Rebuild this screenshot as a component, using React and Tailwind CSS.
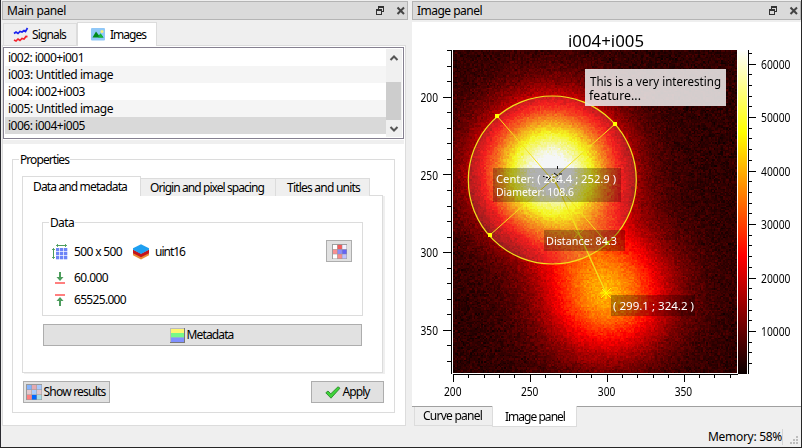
import { useEffect, useLayoutEffect, useRef } from 'react';

// Single-line label whose tracking is adjusted so that it fills a given width.
function Label({ w, className = '', children }) {
  const ref = useRef(null);
  useLayoutEffect(() => {
    const el = ref.current;
    el.style.letterSpacing = '0px';
    const natural = el.getBoundingClientRect().width;
    el.style.letterSpacing = `${(w - natural) / children.length}px`;
  }, [w, children]);
  return (
    <span ref={ref} className={`inline-block shrink-0 whitespace-pre ${className}`}>
      {children}
    </span>
  );
}

const IMAGES = [
  ['i002: i000+i001', 76],
  ['i003: Untitled image', 105],
  ['i004: i002+i003', 77],
  ['i005: Untitled image', 105],
  ['i006: i004+i005', 77],
];

function TitleBar({ title, w, className = '' }) {
  return (
    <div className={`flex h-[19px] shrink-0 items-center border border-[#b4b4b4] bg-[#dadada] pl-[4px] ${className}`}>
      <Label w={w}>{title}</Label>
      <svg className="ml-auto" width="32" height="10" viewBox="0 0 32 10" shapeRendering="crispEdges">
        <path d="M3 0h6v6h-2v-1h1v-3h-4v1h-1z" fill="#333" />
        <path d="M1 3h6v6h-6z M2 5v3h4v-3z" fill="#333" fillRule="evenodd" />
        <path d="M22.5 1.5l6.5 6.5M29 1.5l-6.5 6.5" stroke="#444" strokeWidth="2" shapeRendering="auto" />
      </svg>
    </div>
  );
}

function SignalsIcon() {
  return (
    <svg width="16" height="16" viewBox="0 0 16 16" fill="none" strokeWidth="1.700">
      <path d="M1 6.500L3 5l2 1.500L7 4.500l2 .5 2-1.500 1.500 1L14.500 1" stroke="#1a22ee" />
      <path d="M1 13l2 1 2-2 2 1.500 2-2 2 .5 2-2.500 1.500 .2" stroke="#f3222c" />
    </svg>
  );
}

function PictureIcon() {
  return (
    <svg width="14" height="13" viewBox="0 0 14 13">
      <rect width="14" height="12.500" rx="1" fill="#90c8f8" />
      <path d="M1.500 9.500L5 3.500l3 4 1.500-2 3 4z" fill="#008a1c" />
      <path d="M7 9.500l2.500-4 3 4z" fill="#14b83a" />
      <circle cx="11" cy="3.500" r="1.500" fill="#f5ef7a" />
    </svg>
  );
}

function ShapeIcon() {
  const cells = [0, 1, 2].flatMap((r) => [0, 1, 2].map((c) => [c, r]));
  return (
    <svg width="16" height="16" viewBox="0 0 16 16">
      {cells.map(([c, r]) => (
        <rect key={`${c}${r}`} x={4 + c * 4} y={4 + r * 4} width="3.300" height="3.300" fill="#6d84f7" />
      ))}
      <path d="M4.500 1.500h10M6 .2L4.500 1.500 6 2.800M13 .2l1.500 1.300L13 2.800M1.500 4.500v10M.2 6l1.300-1.500L2.800 6M.2 13l1.300 1.500L2.800 13" stroke="#4c9c5c" fill="none" />
    </svg>
  );
}

function LayersIcon() {
  return (
    <svg width="16" height="16" viewBox="0 0 16 16">
      <path d="M0 7l8 4 8-4v4.200l-8 4.300-8-4.300z" fill="#e88b35" />
      <path d="M0 5.500l8 4 8-4v3.700l-8 4-8-4z" fill="#c4141c" />
      <path d="M8 .3l8 4v1.500L8 9.900 0 5.800V4.300z" fill="#1e9ff0" />
    </svg>
  );
}

function LimitIcon({ top }) {
  return (
    <svg width="12" height="12" viewBox="0 0 12 12">
      <g transform={top ? 'translate(0 12) scale(1 -1)' : undefined}>
        <path d="M5 0h2v5h2.500L6 9 2.500 5H5z" fill="#4c9c5c" />
        <rect x="1" y="10" width="10" height="2" fill="#ff7f7f" />
      </g>
    </svg>
  );
}

function MatrixIcon({ colors, size }) {
  return (
    <svg width={size} height={size} viewBox="0 0 16 16">
      <rect width="16" height="16" fill="#999" />
      {colors.map((c, i) => (
        <rect key={i} x={1 + (i % 3) * 5} y={1 + Math.floor(i / 3) * 5} width="4.500" height="4.500" fill={c} />
      ))}
    </svg>
  );
}

const VIEW_COLORS = ['#ffffff', '#f55a5a', '#f4f0ff', '#f89090', '#8c8cf8', '#6464f5', '#ffffff', '#f88c8c', '#c0c0ff'];
const RESULT_COLORS = ['#84b4ff', '#e4aab0', '#a8c8fc', '#e4c8cc', '#a8ccff', '#e4c8cc', '#ff8080', '#0068ff', '#aadce4'];

function MetadataIcon() {
  return (
    <svg width="15" height="15" viewBox="0 0 15 15">
      <rect width="15" height="15" fill="#777" />
      <rect width="14" height="14" fill="#bbb" />
      <rect x="1" y="1" width="13" height="4" fill="#fff56e" />
      <rect x="1" y="5" width="13" height="4.500" fill="#78f888" />
      <rect x="1" y="9.500" width="13" height="4.500" fill="#8090ff" />
    </svg>
  );
}

function CheckIcon() {
  return (
    <svg width="16" height="13" viewBox="0 0 16 13">
      <path d="M.8 6.800L3 5l2.800 2.800L13 .8l2 1.400L6 12.200z" fill="#3fd43a" stroke="#2c8a2c" strokeWidth=".9" />
    </svg>
  );
}

function Button({ className = '', children }) {
  return (
    <div className={`flex h-[22px] items-center justify-center border border-[#adadad] bg-[#e1e1e1] ${className}`}>
      {children}
    </div>
  );
}

function Group({ title, w, className = '', children }) {
  return (
    <div className={`relative border border-[#dcdcdc] ${className}`}>
      <Label w={w} className="absolute -top-[8px] left-[6px] h-[15px] bg-white px-[1px] leading-[16px]">{title}</Label>
      {children}
    </div>
  );
}

function ImageList() {
  return (
    <div className="flex h-[92px] w-[401px] shrink-0 border border-[#858090] bg-white p-px">
      <div className="w-[381px]">
        {IMAGES.map(([text, w], i) => (
          <div
            key={text}
            className={`flex h-[17px] items-center pl-[3px] ${i === 4 ? 'bg-[#d9d9d9]' : i % 2 ? 'bg-[#f5f5f5]' : 'bg-white'}`}
          >
            <Label w={w}>{text}</Label>
          </div>
        ))}
      </div>
      <div className="ml-auto flex h-[88px] w-[16px] flex-col items-center bg-[#f0f0f0]">
        <svg className="h-[33px]" width="16" height="33" viewBox="0 0 16 33">
          <path d="M4.500 11L8 7.500l3.500 3.500" fill="none" stroke="#555" strokeWidth="2" />
        </svg>
        <div className="h-[38px] w-[15px] self-start bg-[#cdcdcd]" />
        <svg width="16" height="17" viewBox="0 0 16 17">
          <path d="M4.500 7L8 10.500 11.500 7" fill="none" stroke="#555" strokeWidth="2" />
        </svg>
      </div>
    </div>
  );
}

function MainPanel() {
  return (
    <section className="flex w-[408px] flex-col pl-[2px]">
      <TitleBar title="Main panel" w={59} className="mt-px w-[406px]" />
      <div className="z-10 mt-[2px] flex h-[24px] items-end pl-px">
        <div className="mb-px flex h-[22px] w-[74px] items-center gap-[3px] border border-b-0 border-[#dcdcdc] pl-[9px]">
          <SignalsIcon />
          <Label w={34} className="mt-px">Signals</Label>
        </div>
        <div className="flex h-[24px] w-[80px] items-center gap-[5px] border border-b-0 border-[#dcdcdc] bg-white pl-[13px]">
          <PictureIcon />
          <Label w={36}>Images</Label>
        </div>
      </div>
      <div className="-mt-px flex h-[381px] w-[404px] flex-col border border-[#dcdcdc] bg-white pt-px">
        <ImageList />
        <div className="mt-[1px] h-[4px] w-[401px] shrink-0 bg-[#efefef]" />
        <Group title="Properties" w={51} className="ml-[9px] mt-[15px] h-[254px] w-[383px]">
          <div className="flex h-[36px] items-end pl-[9px]">
            <div className="z-10 flex h-[20px] w-[119px] items-center border border-b-0 border-[#dcdcdc] bg-white pl-[10px]">
              <Label w={94}>Data and metadata</Label>
            </div>
            <div className="flex h-[18px] w-[135px] items-center border border-b-0 border-l-0 border-[#dcdcdc] bg-[#efefef] pl-[9px]">
              <Label w={114}>Origin and pixel spacing</Label>
            </div>
            <div className="flex h-[18px] w-[94px] items-center border border-b-0 border-l-0 border-[#dcdcdc] bg-[#efefef] pl-[11px]">
              <Label w={73}>Titles and units</Label>
            </div>
          </div>
          <div className="-mt-px ml-[9px] h-[178px] w-[361px] border border-[#dcdcdc] bg-white shadow-[2px_1px_0_#efefef]">
            <Group title="Data" w={26} className="ml-[19px] mt-[26px] h-[94px] w-[321px]">
              <div className="flex pl-[9px] pt-[17px]">
                <div className="flex flex-col">
                  <div className="flex h-[24px] items-center">
                    <ShapeIcon />
                    <Label w={48} className="ml-[6px]">500 x 500</Label>
                    <span className="ml-[11px]"><LayersIcon /></span>
                    <Label w={30} className="ml-[6px]">uint16</Label>
                  </div>
                  <div className="flex h-[28px] items-center pl-[2px]">
                    <LimitIcon />
                    <Label w={34} className="ml-[8px]">60.000</Label>
                  </div>
                  <div className="flex h-[16px] items-center pl-[2px]">
                    <LimitIcon top />
                    <Label w={52} className="ml-[8px]">65525.000</Label>
                  </div>
                </div>
                <Button className="ml-auto mr-[10px] w-[26px]">
                  <MatrixIcon colors={VIEW_COLORS} size={15} />
                </Button>
              </div>
            </Group>
            <Button className="ml-[20px] mt-[8px] w-[319px] gap-[2px] pr-[2px]">
              <MetadataIcon />
              <Label w={47}>Metadata</Label>
            </Button>
          </div>
          <div className="mt-[8px] flex justify-between pl-[10px] pr-[10px]">
            <Button className="w-[87px] gap-[2px] pr-[2px]">
              <MatrixIcon colors={RESULT_COLORS} size={16} />
              <Label w={62}>Show results</Label>
            </Button>
            <Button className="w-[73px] gap-[2px] pr-[1px]">
              <CheckIcon />
              <Label w={27}>Apply</Label>
            </Button>
          </div>
        </Group>
      </div>
    </section>
  );
}

// "hot" colour map, t in 0..1
function hot(t) {
  const v = Math.max(0, Math.min(1, t));
  return [
    v < 0.365 ? 10.6 + (v / 0.365) * 244.4 : 255,
    v < 0.365 ? 0 : v < 0.746 ? ((v - 0.365) / 0.381) * 255 : 255,
    v < 0.746 ? 0 : ((v - 0.746) / 0.254) * 255,
  ];
}

function Heatmap() {
  const ref = useRef(null);
  useEffect(() => {
    const W = 284;
    const H = 323;
    const ctx = ref.current.getContext('2d');
    const img = ctx.createImageData(W, H);
    let seed = 12345;
    const rand = () => {
      seed = (seed * 1664525 + 1013904223) >>> 0;
      return seed / 4294967296;
    };
    const noise = Array.from({ length: 190 * 215 }, () => rand() + rand() + rand() - 1.5);
    for (let y = 0; y < H; y++) {
      for (let x = 0; x < W; x++) {
        const cx = Math.floor(x / 1.54);
        const cy = Math.floor(y / 1.553);
        const px = cx * 1.54;
        const py = cy * 1.553;
        const a = 62 * Math.exp(-((px - 97) ** 2 + (py - 121) ** 2) / (2 * 44.5 * 44.5));
        const b = 34 * Math.exp(-((px - 153) ** 2 + (py - 242) ** 2) / (2 * 43 * 43));
        const v = 5.2 + a + b + noise[cy * 190 + cx] * 2.6;
        const [r, g, bl] = hot((v - 2.05) / 60.5);
        const o = (y * W + x) * 4;
        img.data[o] = r;
        img.data[o + 1] = g;
        img.data[o + 2] = bl;
        img.data[o + 3] = 255;
      }
    }
    ctx.putImageData(img, 0, 0);
  }, []);
  return <canvas ref={ref} width="284" height="323" className="ml-[41px] mt-[28px] block h-[323px] w-[284px]" />;
}

function Txt({ x, y, w, size = 12, fill = '#000', children }) {
  return (
    <text x={x} y={y} fontSize={size} fill={fill} textLength={w} lengthAdjust="spacingAndGlyphs">
      {children}
    </text>
  );
}

// Axes, colour bar and annotations; user units are window pixels.
function Overlay() {
  const xt = Array.from({ length: 19 }, (_, i) => i);
  const yt = Array.from({ length: 21 }, (_, i) => i - 3);
  const ct = Array.from({ length: 30 }, (_, i) => 4 + i * 2);
  return (
    <svg className="absolute left-0 top-0" width="389" height="384" viewBox="412 22 389 384">
      <defs>
        <linearGradient id="hot" x1="0" y1="0" x2="0" y2="1">
          <stop offset="0" stopColor="#fff" />
          <stop offset="0.254" stopColor="#ff0" />
          <stop offset="0.635" stopColor="#f00" />
          <stop offset="1" stopColor="#0b0000" />
        </linearGradient>
      </defs>
      <Txt x={568} y={47} w={76} size={17}>i004+i005</Txt>
      <g fill="#000" shapeRendering="crispEdges">
        <rect x="451" y="50" width="1" height="324" />
        <rect x="453" y="374" width="285" height="1" />
        {yt.map((i) => {
          const major = i % 5 === 0;
          return <rect key={i} x={major ? 443 : 447} y={Math.floor(97.3 + i * 15.53)} width={major ? 8 : 4} height="1" />;
        })}
        {xt.map((i) => (
          <rect key={i} x={Math.floor(453.3 + i * 15.38)} y="375" width="1" height={i % 5 === 0 ? 7 : 3} />
        ))}
        <rect x="748" y="50" width="1" height="324" />
        {ct.map((k) => (
          <rect key={k} x="749" y={Math.floor(331.5 - (k - 10) * 5.35)} width={k % 10 === 0 ? 7 : 3} height="1" />
        ))}
      </g>
      <rect x="738" y="50" width="9" height="324" fill="url(#hot)" />
      {[200, 250, 300, 350].map((v, i) => (
        <g key={v}>
          <Txt x={420.5} y={102 + i * 77.7} w={17.500}>{v}</Txt>
          <Txt x={444 + i * 76.9} y={396} w={17.500}>{v}</Txt>
        </g>
      ))}
      {[1, 2, 3, 4, 5, 6].map((k) => (
        <Txt key={k} x={761} y={336 - (k - 1) * 53.5} w={29.500}>{k * 10000}</Txt>
      ))}
      <circle cx="552.3" cy="180" r="84" fill="#b8c0c8" fillOpacity=".15" stroke="#f2e21c" strokeWidth="1.2" />
      <g stroke="#f2e21c" strokeWidth="1" fill="none">
        <path d="M497 116L607 243M615 124L490 235" />
        <path d="M552 174L606 293" strokeWidth="1.3" />
        <path d="M602 289l9 9M611 288l-10 10M600 293h12M606 287v12" stroke="#ff0" />
        <path d="M574 230l9 8M583 230l-9 8" />
      </g>
      <path d="M557.500 166v3M557.500 179v3M543 176.500h2M546 177.500h3M554 173l4 3M559 174h3M548 180l3-3" stroke="#111" fill="none" />
      <g fill="#ff0" shapeRendering="crispEdges">
        <rect x="495" y="114" width="4" height="4" />
        <rect x="613" y="122" width="4" height="4" />
        <rect x="488" y="233" width="4" height="4" />
        <rect x="605" y="241" width="4" height="4" />
      </g>
      <g fill="#000" fillOpacity=".28" shapeRendering="crispEdges">
        <rect x="493" y="168" width="128" height="34" />
        <rect x="544" y="230" width="81" height="21" />
        <rect x="611" y="295" width="84" height="21" />
      </g>
      <Txt x={496} y={183} w={120} size={11} fill="#fff">Center: ( 264.4 ; 252.9 )</Txt>
      <Txt x={496} y={196} w={78} size={11} fill="#fff">Diameter: 108.6</Txt>
      <Txt x={546} y={245} w={71} size={11} fill="#fff">Distance: 84.3</Txt>
      <Txt x={613} y={310} w={81} size={11} fill="#fff">( 299.1 ; 324.2 )</Txt>
      <rect x="585" y="69" width="141" height="37" fill="#e8e3e3" fillOpacity=".9" shapeRendering="crispEdges" />
      <Txt x={590} y={86} w={131}>This is a very interesting</Txt>
      <Txt x={589} y={100} w={52}>feature...</Txt>
    </svg>
  );
}

function ImagePanel() {
  return (
    <section className="ml-[4px] flex w-[389px] flex-col">
      <TitleBar title="Image panel" w={65} className="mt-px" />
      <div className="relative mt-[2px] h-[385px] shrink-0 border-b border-[#a0a0a0] bg-white">
        <Heatmap />
        <Overlay />
      </div>
      <div className="z-10 -mt-px flex items-start pl-[2px]">
        <div className="mt-px flex h-[19px] w-[78px] items-center border border-r-0 border-t-0 border-[#dcdcdc] pl-[8px]">
          <Label w={59}>Curve panel</Label>
        </div>
        <div className="flex h-[21px] w-[85px] items-center border border-t-0 border-[#dcdcdc] bg-white pl-[12px] pt-px">
          <Label w={60}>Image panel</Label>
        </div>
      </div>
      <div className="flex h-[21px] items-center justify-end">
        <Label w={74}>Memory: 58%</Label>
        <div className="h-[16px] w-px bg-[#d4d4d4]" />
        <svg width="18" height="18" viewBox="0 0 18 18" fill="#bdbdbd" shapeRendering="crispEdges">
          <path d="M13 8h2v2h-2zM13 11h2v2h-2zM10 11h2v2h-2zM13 14h2v2h-2zM10 14h2v2h-2zM7 14h2v2h-2z" />
        </svg>
      </div>
    </section>
  );
}

export default function App() {
  return (
    <main className="flex h-[448px] w-[802px] overflow-hidden border-b border-r border-[#262626] bg-[#efefef] font-['Noto_Sans','DejaVu_Sans',sans-serif] text-[12px] leading-[16px] text-black shadow-[inset_1px_0_0_#2a2a30]">
      <MainPanel />
      <ImagePanel />
    </main>
  );
}
